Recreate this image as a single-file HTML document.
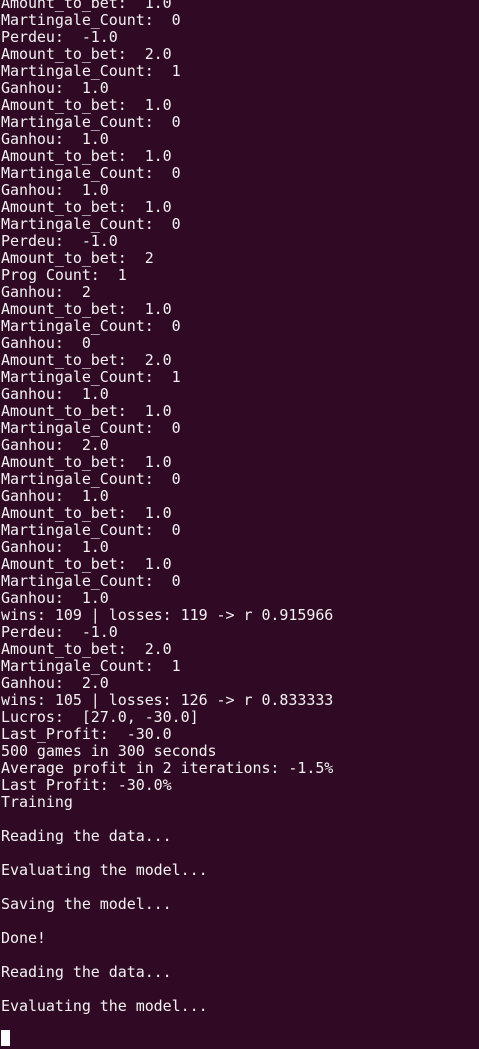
<!DOCTYPE html>
<html><head><style>
html,body{margin:0;padding:0;background:#300a24;width:479px;height:1048px;overflow:hidden}
pre{position:absolute;left:1px;top:-5px;margin:0;font-family:"DejaVu Sans Mono","Liberation Mono",monospace;font-size:15px;line-height:17px;color:#f2f2f2;letter-spacing:-0.05px}
.c{display:inline-block;width:9px;height:16px;background:#fff;vertical-align:top;margin-top:-2px}
</style></head><body><pre>Amount_to_bet:  1.0
Martingale_Count:  0
Perdeu:  -1.0
Amount_to_bet:  2.0
Martingale_Count:  1
Ganhou:  1.0
Amount_to_bet:  1.0
Martingale_Count:  0
Ganhou:  1.0
Amount_to_bet:  1.0
Martingale_Count:  0
Ganhou:  1.0
Amount_to_bet:  1.0
Martingale_Count:  0
Perdeu:  -1.0
Amount_to_bet:  2
Prog Count:  1
Ganhou:  2
Amount_to_bet:  1.0
Martingale_Count:  0
Ganhou:  0
Amount_to_bet:  2.0
Martingale_Count:  1
Ganhou:  1.0
Amount_to_bet:  1.0
Martingale_Count:  0
Ganhou:  2.0
Amount_to_bet:  1.0
Martingale_Count:  0
Ganhou:  1.0
Amount_to_bet:  1.0
Martingale_Count:  0
Ganhou:  1.0
Amount_to_bet:  1.0
Martingale_Count:  0
Ganhou:  1.0
wins: 109 | losses: 119 -> r 0.915966
Perdeu:  -1.0
Amount_to_bet:  2.0
Martingale_Count:  1
Ganhou:  2.0
wins: 105 | losses: 126 -> r 0.833333
Lucros:  [27.0, -30.0]
Last_Profit:  -30.0
500 games in 300 seconds
Average profit in 2 iterations: -1.5%
Last Profit: -30.0%
Training

Reading the data...

Evaluating the model...

Saving the model...

Done!

Reading the data...

Evaluating the model...

<span class="c"></span></pre></body></html>
